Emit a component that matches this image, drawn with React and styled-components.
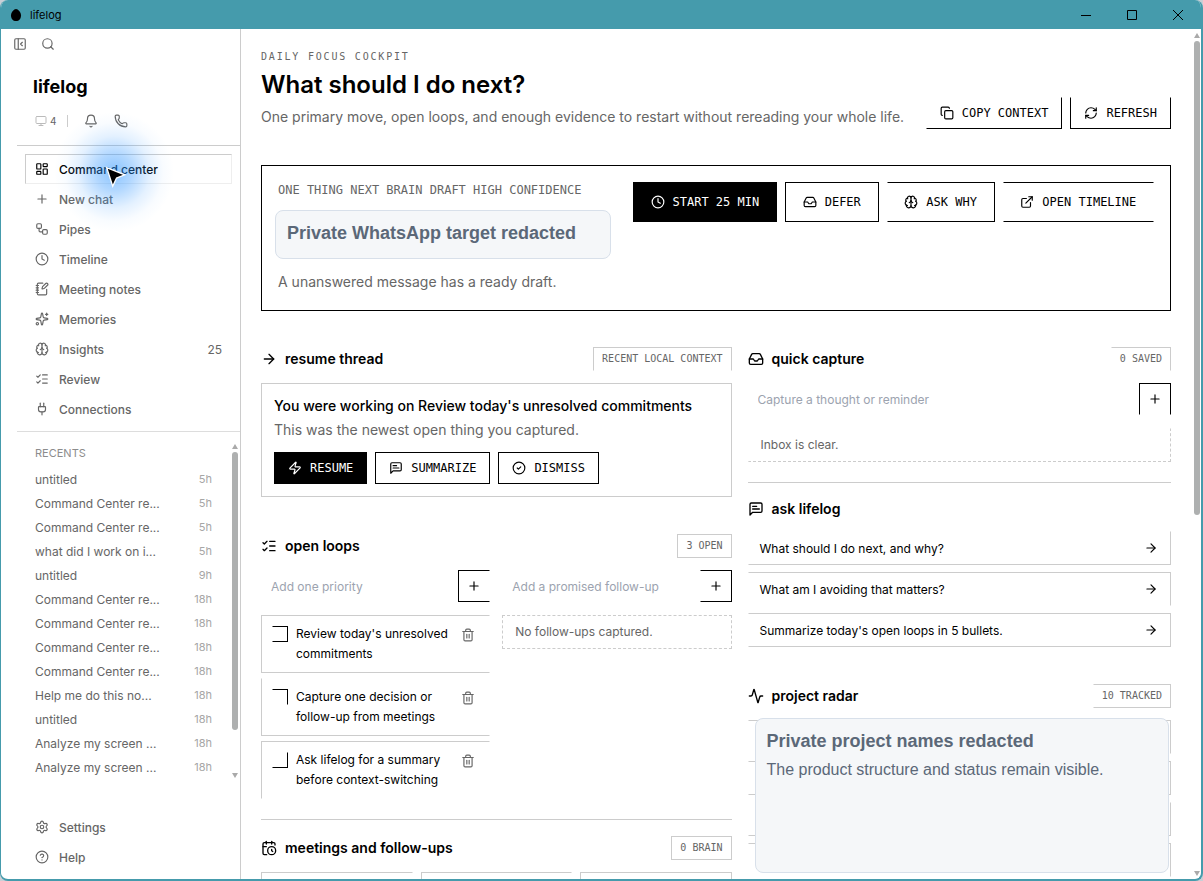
import React from 'react'
import styled, { createGlobalStyle } from 'styled-components'
import {
    Activity, ArrowRight, Bell, Brain, CalendarClock, CircleCheck, Clock, Copy, ExternalLink,
    HelpCircle, Inbox, LayoutDashboard, ListChecks, Monitor, NotebookPen, PanelLeftClose,
    Phone, Plug, Plus, RefreshCw, Search, Settings, Sparkles, Trash2, Workflow, Zap,
} from 'lucide-react'

const TEAL = '#459bac'
const LINE = '#cccccc'
const GREY = '#666666'
const MONO = '"DejaVu Sans Mono", monospace'

const GlobalStyle = createGlobalStyle`
    * {
        box-sizing: border-box;
    }

    body {
        margin: 0;
        background: #c9cfd6;
        color: #000;
        font-family: Inter, "Liberation Sans", sans-serif;
        font-size: 12px;
    }

    button, input {
        font: inherit;
        color: inherit;
        border-radius: 0;
    }

    button {
        cursor: pointer;
    }

    svg {
        flex: none;
        display: block;
    }
`;

/* makes the listed sides of a box see-through */
const openSides = ({ $open }) =>
    ($open || []).map((side) => `border-${side}-color: transparent;`).join('\n')

const Window = styled.div`
    height: 100vh;
    display: flex;
    flex-direction: column;
    overflow: hidden;
    background: #fff;
    border: solid ${TEAL};
    border-width: 0 2px 2px 1px;
    border-radius: 8px;
`;

const TitleBar = styled.header`
    flex: none;
    height: 29px;
    display: flex;
    align-items: center;
    justify-content: space-between;
    background: ${TEAL};
    font-size: 11px;

    .name {
        display: flex;
        align-items: center;
        gap: 8px;
        padding-left: 9px;
    }

    .controls {
        display: flex;
    }
`;

const WindowButton = styled.button`
    width: 46px;
    height: 29px;
    display: grid;
    place-items: center;
    padding: 0;
    border: 0;
    background: none;
`;

const Body = styled.div`
    flex: 1;
    min-height: 0;
    display: flex;
`;

const Sidebar = styled.aside`
    flex: none;
    width: 240px;
    display: flex;
    flex-direction: column;
    padding-left: 16px;
    border-right: 1px solid ${LINE};
    color: ${GREY};
`;

const TopIcons = styled.div`
    display: flex;
    gap: 14px;
    padding: 8px 0 0;
    margin-left: -4px;
`;

const IconButton = styled.button`
    display: flex;
    align-items: center;
    padding: 0;
    border: 0;
    background: none;
    color: ${GREY};
`;

const Brand = styled.div`
    padding: 24px 16px 0;
    color: #000;
    font-size: 18px;
    font-weight: 700;
    line-height: 24px;
`;

const Status = styled.div`
    display: flex;
    align-items: center;
    height: 20px;
    margin: 12px 0 14px;
    padding-left: 18px;
    gap: 16px;

    .screens {
        display: flex;
        align-items: center;
        gap: 3px;
        font-size: 10px;

        svg {
            color: #bbb;
        }
    }

    .bar {
        width: 1px;
        height: 12px;
        margin: 0 0 0 -5px;
        background: ${LINE};
    }
`;

const Nav = styled.nav`
    display: flex;
    flex-direction: column;
    padding: 8px 8px 7px;
    border-top: 1px solid ${LINE};
    border-bottom: 1px solid #ddd;
`;

const NavItem = styled.a`
    display: flex;
    align-items: center;
    gap: 10px;
    height: 30px;
    padding: 0 9px;
    border: 1px solid transparent;
    border-color: ${(p) => (p.$active ? `${LINE} #eee #eee ${LINE}` : 'transparent')};
    color: ${(p) => (p.$active ? '#000' : GREY)};
    font-weight: 500;
    text-decoration: none;

    .count {
        margin-left: auto;
        font-weight: 400;
    }
`;

const Recents = styled.section`
    flex: 1;
    min-height: 0;
    display: flex;
    padding: 8px 1px 0 18px;

    .list {
        flex: 1;
        min-width: 0;
        padding-right: 19px;
    }

    h2 {
        margin: 5px 0;
        color: #8c8c8c;
        font-size: 11px;
        font-weight: 400;
        line-height: 17px;
    }
`;

const Recent = styled.a`
    display: flex;
    align-items: center;
    justify-content: space-between;
    height: 24px;
    color: ${GREY};
    text-decoration: none;

    span {
        color: #a6a6a6;
        font-size: 11px;
    }
`;

const Footer = styled.div`
    display: flex;
    flex-direction: column;
    padding: 31px 8px 7px;
`;

const Track = styled.div`
    flex: none;
    width: 8px;
    display: flex;
    flex-direction: column;
    align-items: center;
    gap: 3px;
    padding: 4px 0 3px;

    &::before, &::after {
        content: '';
        border: 3px solid transparent;
    }

    &::before {
        border-top: 0;
        border-bottom: 5px solid #aaa;
    }

    &::after {
        margin-top: auto;
        border-bottom: 0;
        border-top: 5px solid #aaa;
    }
`;

const Thumb = styled.div`
    width: 6px;
    height: ${(p) => p.$size};
    border-radius: 3px;
    background: #aeb0b0;
`;

const Main = styled.main`
    flex: 1;
    min-width: 0;
    overflow: hidden;
    padding: 20px 22px 20px 20px;
`;

const PageHead = styled.header`
    display: flex;
    align-items: flex-end;
    justify-content: space-between;
    gap: 20px;
    margin-bottom: 36px;

    .kicker {
        margin: 0 0 4px;
        color: ${GREY};
        font: 10px/16px ${MONO};
        letter-spacing: 0.18em;
    }

    h1 {
        margin: 0 0 4px;
        font-size: 24px;
        font-weight: 600;
        line-height: 32px;
    }

    .lead {
        margin: 0;
        color: ${GREY};
        font-size: 14px;
        line-height: 24px;
    }
`;

const Actions = styled.div`
    display: flex;
    gap: 8px;
`;

const Button = styled.button`
    display: flex;
    align-items: center;
    justify-content: center;
    gap: 8px;
    height: ${(p) => (p.$tall ? 40 : 32)}px;
    padding: 0 ${(p) => (p.$tall ? 15 : 13)}px;
    border: 1px solid #000;
    background: ${(p) => (p.$dark ? '#000' : '#fff')};
    color: ${(p) => (p.$dark ? '#fff' : '#000')};
    font: 12px ${MONO};
    white-space: nowrap;
    flex: ${(p) => (p.$tall ? '1 1 auto' : 'none')};
    ${openSides}
`;

const Hero = styled.section`
    display: grid;
    grid-template-columns: 13fr 20fr;
    align-items: start;
    gap: 16px;
    padding: 16px;
    margin-bottom: 36px;
    border: 1px solid #000;

    .label {
        color: ${GREY};
        font: 12px/16px ${MONO};
        white-space: nowrap;
    }

    p {
        margin: 0;
        color: ${GREY};
        font-size: 14px;
        line-height: 24px;
    }
`;

const Redacted = styled.div`
    padding: 10px 11px;
    border: 1px solid #d8e0ea;
    border-radius: 8px;
    background: #f5f7f9;
    color: #5b6878;
    font-family: "Liberation Sans", Arial, sans-serif;

    strong {
        display: block;
        font-size: 18px;
        line-height: 24px;
    }
`;

const HeroRedacted = styled(Redacted)`
    width: 336px;
    margin: 12px 0 11px -3px;
    padding: 10px 11px 13px;
`;

const Columns = styled.div`
    display: grid;
    grid-template-columns: minmax(0, 10fr) minmax(0, 9fr);
    gap: 16px;
`;

const Section = styled.section`
    padding: ${(p) => (p.$first ? 0 : 16)}px 0 20px;
    border-top: ${(p) => (p.$first ? 0 : 1)}px solid ${(p) => (p.$rule ? LINE : 'transparent')};
`;

const SectionHead = styled.div`
    display: flex;
    align-items: center;
    justify-content: space-between;
    margin-bottom: 12px;

    h2 {
        display: flex;
        align-items: center;
        gap: 8px;
        margin: 0;
        font-size: 14px;
        font-weight: 600;
        line-height: 20px;
    }
`;

const Badge = styled.span`
    padding: 0 8px;
    border: 1px solid ${LINE};
    color: ${GREY};
    font: 10px/22px ${MONO};
    ${openSides}
`;

const Card = styled.div`
    padding: 12px;
    border: 1px solid ${LINE};

    h3, p {
        margin: 0 0 4px;
        font-size: 14px;
        font-weight: 500;
        line-height: 20px;
    }

    p {
        margin-bottom: 12px;
        color: ${GREY};
        font-weight: 400;
    }
`;

const AddRow = styled.form`
    display: flex;
    margin-bottom: 13px;

    input {
        flex: 1;
        min-width: 0;
        height: 32px;
        padding: 0 10px;
        border: 0;
        outline: 0;
        background: none;
    }

    input::placeholder {
        color: #9ca3af;
        opacity: 1;
    }

    button {
        width: 32px;
        height: 32px;
        padding: 0;
    }
`;

const Loops = styled.div`
    display: grid;
    grid-template-columns: minmax(0, 1fr) minmax(0, 1fr);
    gap: 12px;
`;

const Tasks = styled.ul`
    display: grid;
    gap: 5px;
    margin: 0;
    padding: 0;
    list-style: none;
`;

const Task = styled.li`
    display: flex;
    align-items: flex-start;
    padding: 8px 14px 8px 10px;
    border: 1px solid ${LINE};
    line-height: 20px;
    ${openSides}

    label {
        flex: 1;
        padding: 0 8px;
    }

    button {
        margin-top: 4px;
    }
`;

const Check = styled.input.attrs({ type: 'checkbox' })`
    appearance: none;
    flex: none;
    width: 16px;
    height: 16px;
    margin: 2px 0 0;
    border: 1px solid #000;
    ${openSides}
`;

const Empty = styled.div`
    padding: 6px 12px;
    border: 1px dashed ${LINE};
    color: ${GREY};
    line-height: 20px;
    ${openSides}
`;

const Stack = styled.div`
    display: grid;
    gap: 7px;
`;

const Question = styled.button`
    display: flex;
    align-items: center;
    justify-content: space-between;
    height: 34px;
    padding: 0 12px 0 11px;
    border: 1px solid ${LINE};
    background: #fff;
    text-align: left;
    ${openSides}
`;

const Radar = styled.div`
    position: relative;

    ${Redacted} {
        position: absolute;
        inset: -2px 2px auto 7px;
        height: 155px;
    }

    p {
        margin: 5px 0 0;
        font-size: 16px;
        line-height: 24px;
    }
`;

const Tile = styled.div`
    height: 34px;
    border: 1px solid ${LINE};
    ${openSides}
`;

const Meetings = styled.div`
    display: grid;
    grid-template-columns: repeat(3, 1fr);
    gap: 8px;
`;

const Meeting = styled.div`
    height: 80px;
    border: 1px solid ${LINE};
    ${openSides}
`;

const Glow = styled.div`
    position: absolute;
    top: 112px;
    left: 54px;
    width: 120px;
    height: 120px;
    pointer-events: none;
    background: radial-gradient(closest-side, rgba(42, 148, 255, 0.55), rgba(50, 150, 255, 0.38) 30%, rgba(70, 160, 255, 0.15) 60%, rgba(90, 170, 255, 0.04) 82%, transparent);

    svg {
        position: absolute;
        top: 53px;
        left: 51px;
    }
`;

const ChatIcon = ({ size }) => (
    <svg width={size} height={size} viewBox='0 0 24 24' fill='none' stroke='currentColor' strokeWidth='2' strokeLinecap='round' strokeLinejoin='round'>
        <path d='M21 15a2 2 0 0 1-2 2H7l-4 4V5a2 2 0 0 1 2-2h14a2 2 0 0 1 2 2z' />
        <path d='M13 8H7M17 12H7' />
    </svg>
)

const navItems = [
    { icon: LayoutDashboard, text: 'Command center', active: true },
    { icon: Plus, text: 'New chat' },
    { icon: Workflow, text: 'Pipes' },
    { icon: Clock, text: 'Timeline' },
    { icon: NotebookPen, text: 'Meeting notes' },
    { icon: Sparkles, text: 'Memories' },
    { icon: Brain, text: 'Insights', count: 25 },
    { icon: ListChecks, text: 'Review' },
    { icon: Plug, text: 'Connections' },
]

const recents = [
    ['untitled', '5h'],
    ['Command Center re...', '5h'],
    ['Command Center re...', '5h'],
    ['what did I work on i...', '5h'],
    ['untitled', '9h'],
    ['Command Center re...', '18h'],
    ['Command Center re...', '18h'],
    ['Command Center re...', '18h'],
    ['Command Center re...', '18h'],
    ['Help me do this no...', '18h'],
    ['untitled', '18h'],
    ['Analyze my screen ...', '18h'],
    ['Analyze my screen ...', '18h'],
]

const tasks = [
    { text: "Review today's unresolved commitments", open: ['right'], box: ['left'] },
    { text: 'Capture one decision or follow-up from meetings', open: ['top', 'right'], box: ['left', 'bottom'] },
    { text: 'Ask lifelog for a summary before context-switching', open: ['right', 'bottom'], box: ['left', 'top'] },
]

const questions = [
    { text: 'What should I do next, and why?', open: ['top', 'left'] },
    { text: 'What am I avoiding that matters?', open: ['bottom', 'left'] },
    { text: "Summarize today's open loops in 5 bullets.", open: ['left'] },
]

const Heading = ({ icon: Icon, title, badge, open }) => (
    <SectionHead>
        <h2><Icon size={16} />{title}</h2>
        {badge && <Badge $open={open}>{badge}</Badge>}
    </SectionHead>
)

const AddForm = ({ hint, open }) => (
    <AddRow onSubmit={(e) => e.preventDefault()}>
        <input type='text' placeholder={hint} aria-label={hint} />
        <Button type='submit' aria-label='Add' $open={open}><Plus size={14} /></Button>
    </AddRow>
)

const SideNav = () => (
    <Sidebar>
        <TopIcons>
            <IconButton aria-label='Collapse sidebar'><PanelLeftClose size={14} /></IconButton>
            <IconButton aria-label='Search'><Search size={14} /></IconButton>
        </TopIcons>
        <Brand>lifelog</Brand>
        <Status>
            <div className='screens'><Monitor size={12} />4</div>
            <div className='bar' />
            <IconButton aria-label='Notifications'><Bell size={14} /></IconButton>
            <IconButton aria-label='Calls'><Phone size={14} /></IconButton>
        </Status>
        <Nav>
            {navItems.map(({ icon: Icon, text, active, count }) => (
                <NavItem key={text} href='#' $active={active}>
                    <Icon size={14} />
                    {text}
                    {count && <span className='count'>{count}</span>}
                </NavItem>
            ))}
        </Nav>
        <Recents>
            <div className='list'>
                <h2>RECENTS</h2>
                {recents.map(([name, age], i) => (
                    <Recent key={i} href='#'>{name}<span>{age}</span></Recent>
                ))}
            </div>
            <Track><Thumb $size='278px' /></Track>
        </Recents>
        <Footer>
            <NavItem href='#'><Settings size={14} />Settings</NavItem>
            <NavItem href='#'><HelpCircle size={14} />Help</NavItem>
        </Footer>
    </Sidebar>
)

const App = () => {
    return (
        <>
            <GlobalStyle />
            <Window>
                <TitleBar>
                    <div className='name'>
                        <svg width='12' height='14' viewBox='0 0 12 14'><path d='M6 1c2 0 5 3 5 6.500S9 13 6 13 1 11 1 7.500 4 1 6 1z' /></svg>
                        lifelog
                    </div>
                    <div className='controls'>
                        <WindowButton aria-label='Minimize'>
                            <svg width='12' height='12' stroke='#000'><path d='M1 6.500h10' /></svg>
                        </WindowButton>
                        <WindowButton aria-label='Maximize'>
                            <svg width='12' height='12' stroke='#000' fill='none'><path d='M1.500 1.500h9v9h-9z' /></svg>
                        </WindowButton>
                        <WindowButton aria-label='Close'>
                            <svg width='12' height='12' stroke='#000'><path d='M1 1l10 10M11 1L1 11' /></svg>
                        </WindowButton>
                    </div>
                </TitleBar>
                <Body>
                    <SideNav />
                    <Main>
                        <PageHead>
                            <div>
                                <p className='kicker'>DAILY FOCUS COCKPIT</p>
                                <h1>What should I do next?</h1>
                                <p className='lead'>One primary move, open loops, and enough evidence to restart without rereading your whole life.</p>
                            </div>
                            <Actions>
                                <Button $open={['top', 'left']}><Copy size={14} />COPY CONTEXT</Button>
                                <Button $open={['top']}><RefreshCw size={14} />REFRESH</Button>
                            </Actions>
                        </PageHead>

                        <Hero>
                            <div>
                                <div className='label'>ONE THING NEXT BRAIN DRAFT HIGH CONFIDENCE</div>
                                <HeroRedacted><strong>Private WhatsApp target redacted</strong></HeroRedacted>
                                <p>A unanswered message has a ready draft.</p>
                            </div>
                            <Actions>
                                <Button $tall $dark><Clock size={14} />START 25 MIN</Button>
                                <Button $tall><Inbox size={14} />DEFER</Button>
                                <Button $tall $open={['left']}><Brain size={14} />ASK WHY</Button>
                                <Button $tall $open={['left', 'right']}><ExternalLink size={14} />OPEN TIMELINE</Button>
                            </Actions>
                        </Hero>

                        <Columns>
                            <div>
                                <Section $first>
                                    <Heading icon={ArrowRight} title='resume thread' badge='RECENT LOCAL CONTEXT' open={['bottom']} />
                                    <Card>
                                        <h3>You were working on Review today's unresolved commitments</h3>
                                        <p>This was the newest open thing you captured.</p>
                                        <Actions>
                                            <Button $dark><Zap size={14} />RESUME</Button>
                                            <Button><ChatIcon size={14} />SUMMARIZE</Button>
                                            <Button><CircleCheck size={14} />DISMISS</Button>
                                        </Actions>
                                    </Card>
                                </Section>
                                <Section>
                                    <Heading icon={ListChecks} title='open loops' badge='3 OPEN' />
                                    <Loops>
                                        <div>
                                            <AddForm hint='Add one priority' open={['right']} />
                                            <Tasks>
                                                {tasks.map(({ text, open, box }, i) => (
                                                    <Task key={text} $open={open}>
                                                        <Check id={`task-${i}`} $open={box} />
                                                        <label htmlFor={`task-${i}`}>{text}</label>
                                                        <IconButton aria-label='Delete'><Trash2 size={14} /></IconButton>
                                                    </Task>
                                                ))}
                                            </Tasks>
                                        </div>
                                        <div>
                                            <AddForm hint='Add a promised follow-up' open={['left']} />
                                            <Empty>No follow-ups captured.</Empty>
                                        </div>
                                    </Loops>
                                </Section>
                                <Section $rule>
                                    <Heading icon={CalendarClock} title='meetings and follow-ups' badge='0 BRAIN' />
                                    <Meetings>
                                        <Meeting $open={['right']} />
                                        <Meeting $open={['right']} />
                                        <Meeting />
                                    </Meetings>
                                </Section>
                            </div>

                            <div>
                                <Section $first>
                                    <Heading icon={Inbox} title='quick capture' badge='0 SAVED' open={['left', 'bottom']} />
                                    <AddForm hint='Capture a thought or reminder' open={['bottom']} />
                                    <Empty $open={['top', 'left']}>Inbox is clear.</Empty>
                                </Section>
                                <Section $rule>
                                    <Heading icon={ChatIcon} title='ask lifelog' />
                                    <Stack>
                                        {questions.map(({ text, open }) => (
                                            <Question key={text} $open={open}>{text}<ArrowRight size={14} /></Question>
                                        ))}
                                    </Stack>
                                </Section>
                                <Section>
                                    <Heading icon={Activity} title='project radar' badge='10 TRACKED' open={['left']} />
                                    <Radar>
                                        <Stack>
                                            <Tile $open={['left', 'bottom']} />
                                            <Tile $open={['left']} />
                                            <Tile $open={['left', 'top']} />
                                            <Tile $open={['left', 'bottom']} />
                                        </Stack>
                                        <Redacted>
                                            <strong>Private project names redacted</strong>
                                            <p>The product structure and status remain visible.</p>
                                        </Redacted>
                                    </Radar>
                                </Section>
                            </div>
                        </Columns>
                    </Main>
                    <Track><Thumb $size='474px' /></Track>
                </Body>
            </Window>
            <Glow>
                <svg width='22' height='24' viewBox='0 0 20 22'>
                    <path d='M1.500 2.500 18 9 10.500 12 7 19.500z' fill='#000' stroke='#fff' strokeWidth='1.200' />
                </svg>
            </Glow>
        </>
    )
}

export default App
